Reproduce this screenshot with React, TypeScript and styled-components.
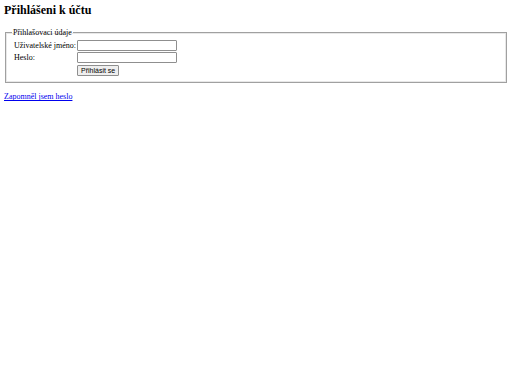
import React from "react";
import styled, { createGlobalStyle } from "styled-components";

const GlobalStyle = createGlobalStyle`
  html, body {
    margin: 0;
    padding: 0;
    background: #ffffff;
  }
  body {
    font-family: "Liberation Serif", "Times New Roman", serif;
    font-size: 8px;
    color: #000000;
  }
`;

const Page = styled.div`
  padding: 3px 4px;
`;

const Title = styled.h2`
  margin: 0 0 11px;
  font-size: 12px;
  line-height: 14px;
  font-weight: bold;
`;

const Fieldset = styled.fieldset`
  margin: 0 1px 0 1px;
  padding: 2px 6px 5px;
  border: 1px solid #a0a0a0;
  box-shadow: inset 0 0 0 1px #e8e8e8;
`;

const Legend = styled.legend`
  padding: 0 1px;
  font-size: 8px;
  line-height: 9px;
`;

const FormTable = styled.table`
  border-collapse: separate;
  border-spacing: 1px;
  font-size: 8px;
`;

const LabelCell = styled.td`
  padding: 0 0 0 1px;
  white-space: nowrap;
`;

const FieldCell = styled.td`
  padding: 0;
`;

const TextInput = styled.input`
  box-sizing: border-box;
  width: 100px;
  height: 11px;
  margin: 0;
  padding: 0 2px;
  border: 1px solid #8f8f8f;
  border-radius: 1px;
  font-size: 7px;
  background: #ffffff;
`;

const SubmitButton = styled.button`
  box-sizing: border-box;
  height: 11px;
  margin: 1px 0 0;
  padding: 0 3px;
  border: 1px solid #8f8f8f;
  border-radius: 1px;
  background: #efefef;
  font-family: "Liberation Sans", Arial, sans-serif;
  font-size: 7px;
  line-height: 9px;
  color: #000000;
`;

const ForgotLink = styled.a`
  display: inline-block;
  margin-top: 9px;
  color: #0000ee;
  text-decoration: underline;
  text-decoration-skip-ink: none;
  font-size: 8px;
`;

export default function App() {
  return (
    <>
      <GlobalStyle />
      <Page>
        <Title>Přihlášeni k účtu</Title>
        <form onSubmit={(e) => e.preventDefault()}>
          <Fieldset>
            <Legend>Přihlašovaci údaje</Legend>
            <FormTable>
              <tbody>
                <tr>
                  <LabelCell>Uživatelské jméno:</LabelCell>
                  <FieldCell>
                    <TextInput type="text" />
                  </FieldCell>
                </tr>
                <tr>
                  <LabelCell>Heslo:</LabelCell>
                  <FieldCell>
                    <TextInput type="password" />
                  </FieldCell>
                </tr>
                <tr>
                  <LabelCell />
                  <FieldCell>
                    <SubmitButton type="submit">Přihlásit se</SubmitButton>
                  </FieldCell>
                </tr>
              </tbody>
            </FormTable>
          </Fieldset>
        </form>
        <ForgotLink href="#">Zapomněl jsem heslo</ForgotLink>
      </Page>
    </>
  );
}
